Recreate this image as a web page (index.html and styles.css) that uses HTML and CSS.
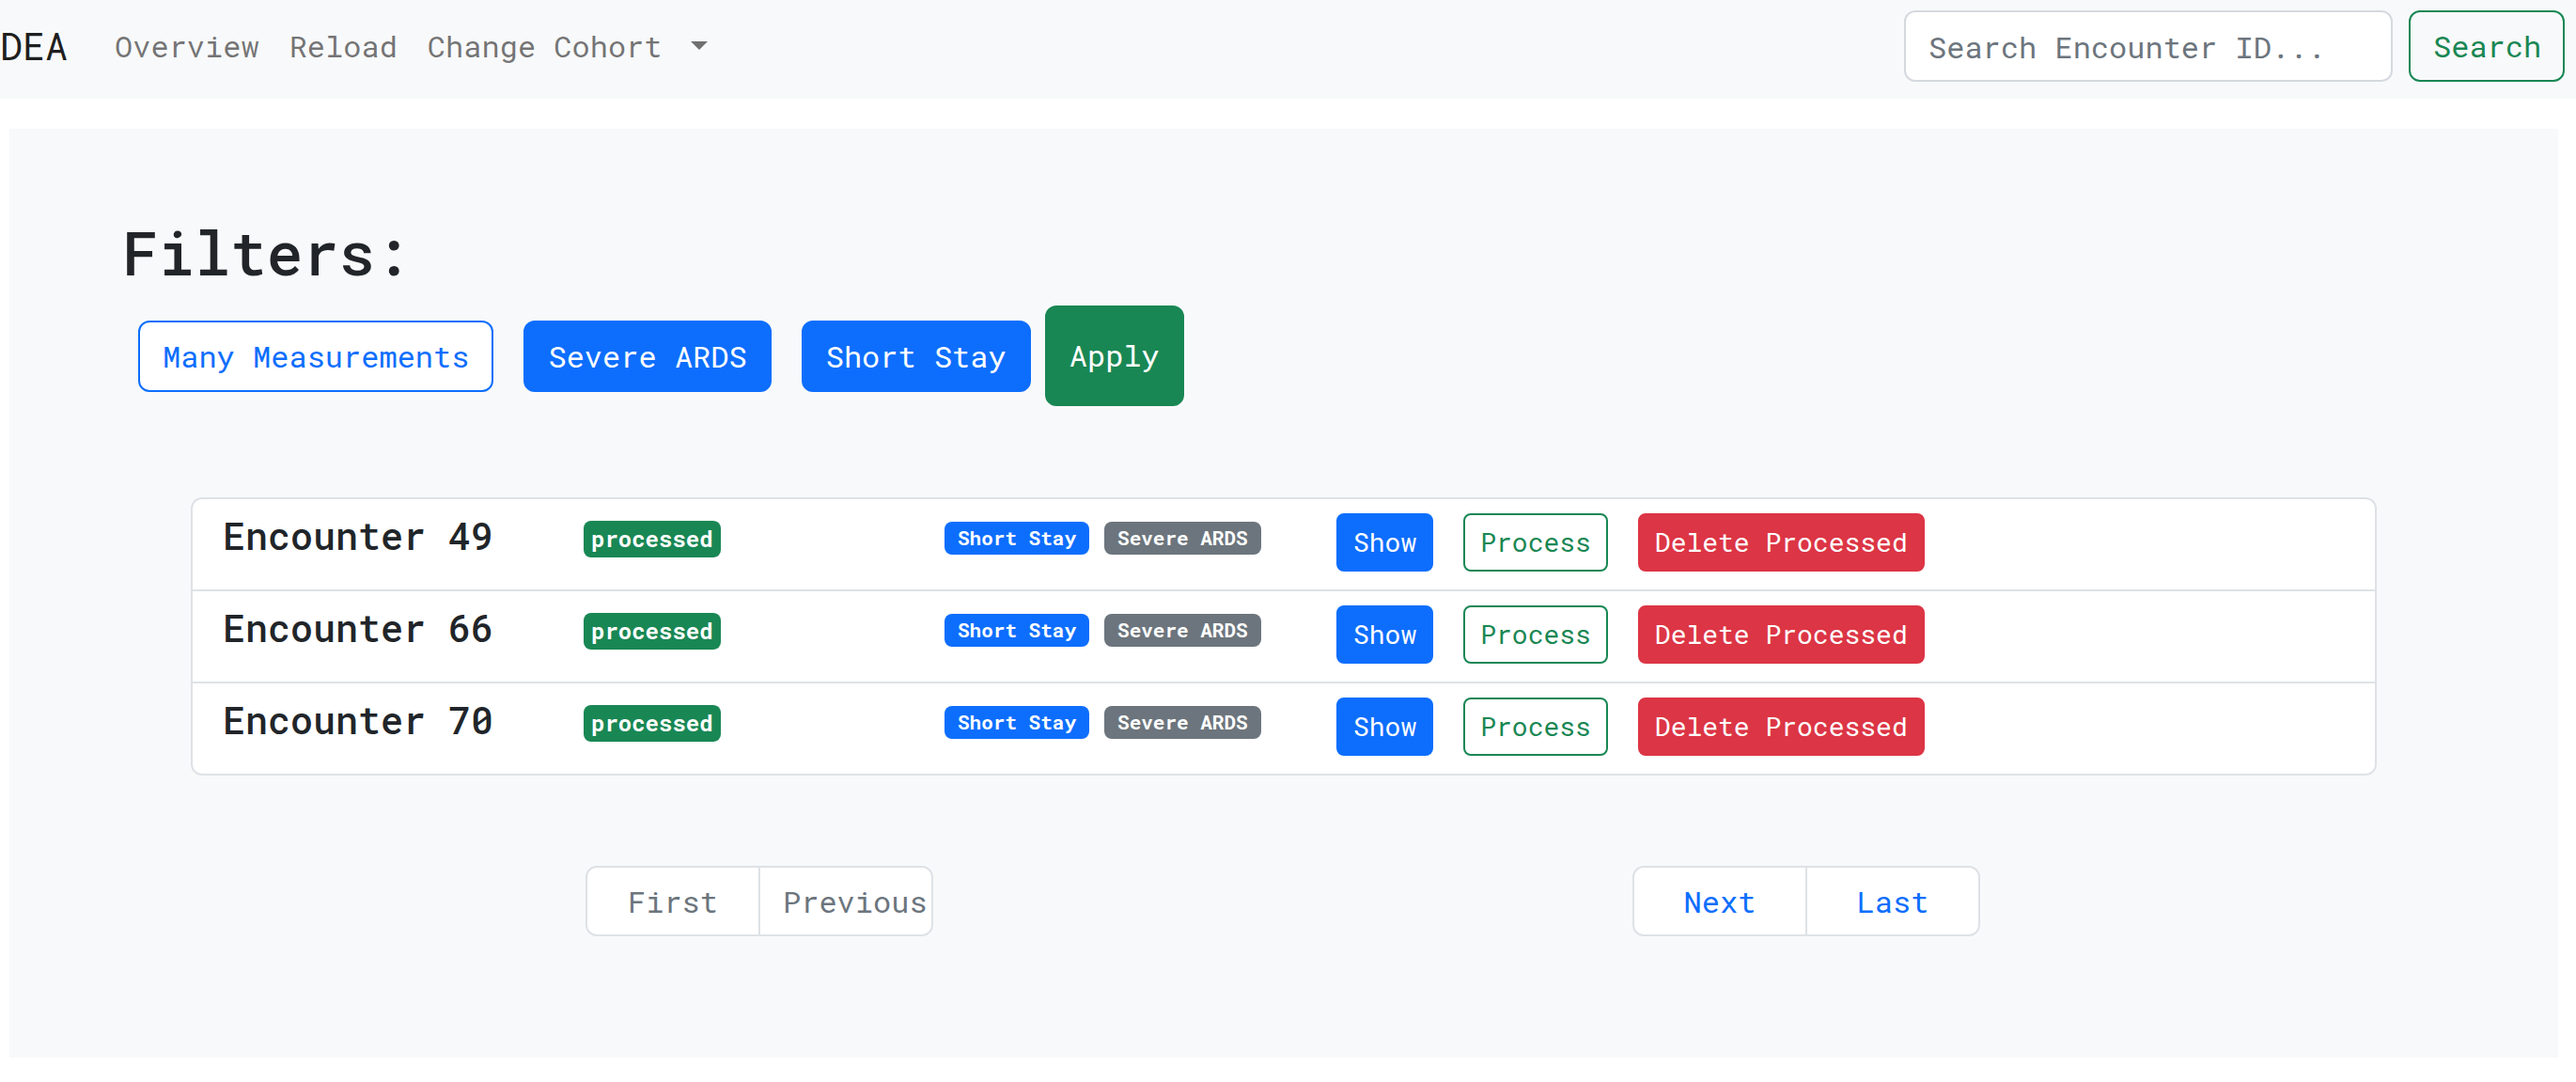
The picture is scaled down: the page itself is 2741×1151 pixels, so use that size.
FILE: index.html
```html
<!DOCTYPE html>
<html lang="en">
<head>
<meta charset="utf-8">
<title>DEA</title>
<link rel="stylesheet" href="styles.css">
</head>
<body>
<nav class="navbar">
  <a class="brand" href="#">DEA</a>
  <ul class="nav">
    <li><a class="nav-link" href="#">Overview</a></li>
    <li><a class="nav-link" href="#">Reload</a></li>
    <li><a class="nav-link dropdown-toggle" href="#">Change Cohort</a></li>
  </ul>
  <form class="search">
    <input class="search-input" type="text" placeholder="Search Encounter ID...">
    <button class="btn btn-outline-success search-btn" type="button">Search</button>
  </form>
</nav>

<main class="panel">
  <h2 class="filters-title">Filters:</h2>
  <div class="filters">
    <button class="btn btn-outline-primary gap-lg" type="button">Many Measurements</button>
    <button class="btn btn-primary gap-lg" type="button">Severe ARDS</button>
    <button class="btn btn-primary gap-sm" type="button">Short Stay</button>
    <button class="btn btn-success btn-apply" type="button">Apply</button>
  </div>

  <ul class="encounters">
    <li class="encounter">
      <h5 class="enc-title">Encounter 49</h5>
      <div class="enc-status"><span class="badge badge-processed">processed</span></div>
      <div class="enc-tags"><span class="badge badge-tag bg-primary">Short Stay</span><span class="badge badge-tag bg-secondary">Severe ARDS</span></div>
      <div class="enc-actions">
        <button class="btn btn-sm btn-primary" type="button">Show</button>
        <button class="btn btn-sm btn-outline-success" type="button">Process</button>
        <button class="btn btn-sm btn-danger" type="button">Delete Processed</button>
      </div>
    </li>
    <li class="encounter">
      <h5 class="enc-title">Encounter 66</h5>
      <div class="enc-status"><span class="badge badge-processed">processed</span></div>
      <div class="enc-tags"><span class="badge badge-tag bg-primary">Short Stay</span><span class="badge badge-tag bg-secondary">Severe ARDS</span></div>
      <div class="enc-actions">
        <button class="btn btn-sm btn-primary" type="button">Show</button>
        <button class="btn btn-sm btn-outline-success" type="button">Process</button>
        <button class="btn btn-sm btn-danger" type="button">Delete Processed</button>
      </div>
    </li>
    <li class="encounter">
      <h5 class="enc-title">Encounter 70</h5>
      <div class="enc-status"><span class="badge badge-processed">processed</span></div>
      <div class="enc-tags"><span class="badge badge-tag bg-primary">Short Stay</span><span class="badge badge-tag bg-secondary">Severe ARDS</span></div>
      <div class="enc-actions">
        <button class="btn btn-sm btn-primary" type="button">Show</button>
        <button class="btn btn-sm btn-outline-success" type="button">Process</button>
        <button class="btn btn-sm btn-danger" type="button">Delete Processed</button>
      </div>
    </li>
  </ul>

  <div class="pager">
    <ul class="pagination">
      <li><a class="page-link disabled" href="#">First</a></li>
      <li><a class="page-link disabled" href="#">Previous</a></li>
    </ul>
    <ul class="pagination">
      <li><a class="page-link" href="#">Next</a></li>
      <li><a class="page-link" href="#">Last</a></li>
    </ul>
  </div>
</main>
</body>
</html>
```
FILE: styles.css
```css
* { box-sizing: border-box; }

html, body {
  margin: 0;
  padding: 0;
  background: #fff;
}

body {
  font-family: "Roboto Mono", "DejaVu Sans Mono", "Liberation Mono", monospace;
  font-size: 32px;
  line-height: 48px;
  color: #212529;
}

a { text-decoration: none; }
ul { list-style: none; margin: 0; padding: 0; }

/* ---------- navbar ---------- */
.navbar {
  display: flex;
  align-items: center;
  height: 105px;
  padding: 0 12px 7px 0;
  background: #f8f9fa;
}

.brand {
  font-size: 40px;
  line-height: 60px;
  color: rgba(0, 0, 0, 0.9);
  margin-right: 34px;
}

.nav {
  display: flex;
  align-items: center;
}

.nav-link {
  display: block;
  padding: 0 16px;
  color: rgba(0, 0, 0, 0.55);
  line-height: 48px;
}

.dropdown-toggle::after {
  content: "";
  display: inline-block;
  margin-left: 30px;
  vertical-align: 0.255em;
  border-top: 9px solid;
  border-right: 9px solid transparent;
  border-left: 9px solid transparent;
  border-bottom: 0;
}

.search {
  margin-left: auto;
  display: flex;
  align-items: center;
}

.search-input {
  width: 520px;
  height: 76px;
  padding: 12px 24px;
  font: inherit;
  line-height: 48px;
  color: #212529;
  background: #fff;
  border: 2px solid #d5d9de;
  border-radius: 12px;
  outline: none;
}

.search-input::placeholder { color: #6c757d; }

.search-btn {
  margin-left: 17px;
  width: 166px;
  background: transparent;
}

/* ---------- buttons ---------- */
.btn {
  display: inline-block;
  font: inherit;
  font-size: 32px;
  line-height: 48px;
  padding: 12px 24px;
  border: 2px solid transparent;
  border-radius: 12px;
  background: transparent;
  cursor: pointer;
  white-space: nowrap;
}

.btn-primary { background: #0d6efd; border-color: #0d6efd; color: #fff; }
.btn-success { background: #198754; border-color: #198754; color: #fff; }
.btn-danger { background: #dc3545; border-color: #dc3545; color: #fff; }
.btn-outline-primary { background: #fff; border-color: #0d6efd; color: #0d6efd; }
.btn-outline-success { background: #fff; border-color: #198754; color: #198754; }
.search-btn.btn-outline-success { background: transparent; }

.btn-sm {
  font-size: 28px;
  line-height: 42px;
  padding: 8px 16px;
  border-radius: 8px;
}

/* ---------- panel ---------- */
.panel {
  margin: 32px 19px 0 10px;
  padding: 93px 115px 129px;
  background: #f8f9fa;
}

.filters-title {
  margin: 0 0 0 5px;
  font-size: 64px;
  line-height: 77px;
  font-weight: 500;
  color: #212529;
}

.filters {
  display: flex;
  align-items: center;
  margin: 18px 0 0 22px;
}

.gap-lg { margin-right: 32px; }
.gap-sm { margin-right: 15px; }

.btn-apply {
  padding-top: 27px;
  padding-bottom: 28px;
}

/* ---------- encounter list ---------- */
.encounters {
  margin: 97px 78px 0;
  background: #fff;
  border: 2px solid #dee2e6;
  border-radius: 12px;
}

.encounter {
  display: grid;
  grid-template-columns: 384px 384px 417px auto;
  align-items: start;
  height: 96px;
  padding: 15px 32px 17px;
}

.encounter + .encounter { border-top: 2px solid #dee2e6; height: 98px; }

.enc-title {
  margin: 0;
  font-size: 40px;
  line-height: 48px;
  font-weight: 500;
  color: #212529;
}

.badge {
  display: inline-block;
  color: #fff;
  font-weight: 700;
  white-space: nowrap;
}

.badge-processed {
  margin-top: 5px;
  height: 39px;
  padding: 0 8px;
  font-size: 24px;
  line-height: 39px;
  background: #198754;
  border-radius: 8px;
}

.enc-tags {
  display: flex;
  gap: 16px;
  margin-top: 9px;
}

.badge-tag {
  height: 35px;
  padding: 0 14px;
  font-size: 21px;
  line-height: 35px;
  border-radius: 8px;
}

.bg-primary { background: #0d6efd; }
.bg-secondary { background: #6c757d; }

.enc-actions {
  display: flex;
  gap: 32px;
  margin-top: 0;
}

/* ---------- pagination ---------- */
.pager {
  display: flex;
  justify-content: space-between;
  margin: 96px 78px 0;
  padding: 0 422px 0 420px;
}

.pagination {
  display: flex;
}

.page-link {
  display: block;
  width: 186px;
  height: 75px;
  padding: 12px 24px;
  line-height: 47px;
  text-align: center;
  white-space: nowrap;
  background: #fff;
  border: 2px solid #dee2e6;
  color: #0d6efd;
}

.pagination li + li .page-link { margin-left: -2px; }
.pagination li:first-child .page-link { border-radius: 12px 0 0 12px; }
.pagination li:last-child .page-link { border-radius: 0 12px 12px 0; }

.page-link.disabled { color: #6c757d; }
```
